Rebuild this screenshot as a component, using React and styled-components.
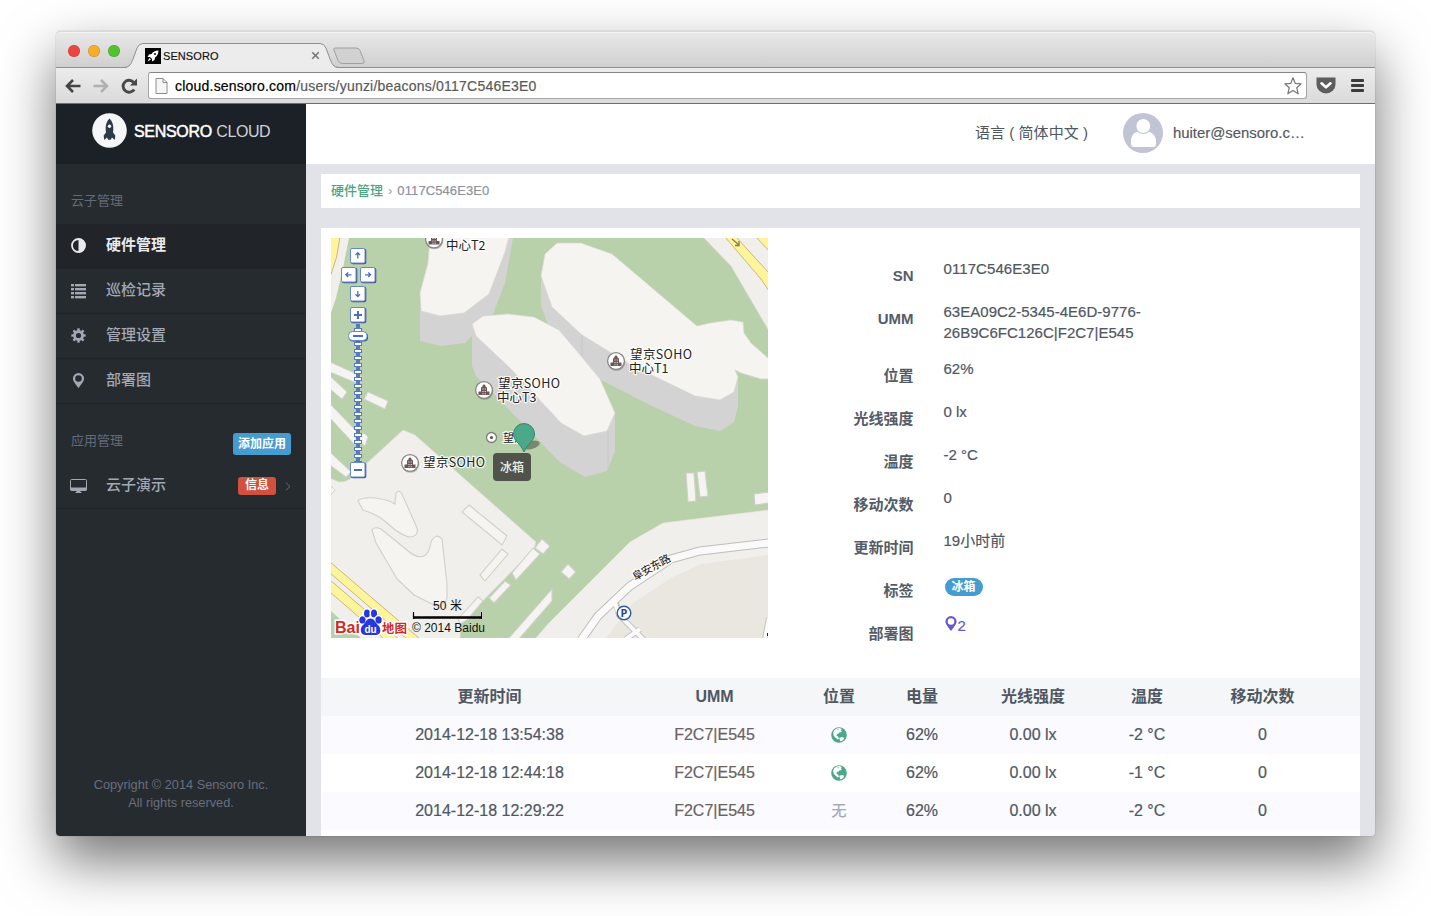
import React from "react";
import styled, { createGlobalStyle, css } from "styled-components";

const sans = `"Liberation Sans", "Noto Sans CJK SC", Arial, sans-serif`;

const GlobalStyle = createGlobalStyle`
  *, *::before, *::after { box-sizing: border-box; }
  body { margin: 0; background: #fff; font-family: ${sans}; color: #4f5762; }
  #root { height: 916px; overflow: hidden; }
`;

const Desktop = styled.div`
  height: 916px;
  padding: 31px 56px 80px;
  overflow: hidden;
  background: #fff;
`;

const Window = styled.div`
  width: 1319px;
  height: 805px;
  display: flex;
  flex-direction: column;
  border-radius: 5px 5px 4px 4px;
  box-shadow: 0 0 1px rgba(0, 0, 0, 0.5), 0 25px 55px rgba(0, 0, 0, 0.55);
`;

/* ---------- browser chrome ---------- */
const TabBar = styled.div`
  height: 37px;
  flex: none;
  display: flex;
  align-items: flex-end;
  border-radius: 5px 5px 0 0;
  border-top: 1px solid #d9d9d9;
  background: linear-gradient(#e9e9e9, #cfcfcf);
  box-shadow: inset 0 1px 0 #f3f3f3, inset 0 -1px 0 #8f8f8f;
`;

const Lights = styled.div`
  display: flex;
  gap: 8px;
  padding: 0 0 11px 12px;
`;

const Light = styled.span`
  width: 12px;
  height: 12px;
  border-radius: 50%;
  background: ${(p) => p.$color};
  box-shadow: inset 0 0 0 0.5px rgba(0, 0, 0, 0.2);
`;

const TabStrip = styled.div`
  display: grid;
  width: 240px;
  height: 25px;
  margin-left: 10px;
  & > * { grid-area: 1 / 1; }
`;

const TabContent = styled.div`
  display: flex;
  align-items: center;
  height: 25px;
  padding: 0 15px 0 15px;
  font-size: 11px;
  letter-spacing: 0.08px;
  color: #111;
  -webkit-text-stroke: 0.15px #111;
  z-index: 1;
`;

const TabTitle = styled.span`
  margin-left: 2px;
  flex: none;
  width: 148px;
`;

const Favicon = styled.svg`
  width: 16px;
  height: 16px;
  flex: none;
`;

const Toolbar = styled.div`
  height: 36px;
  flex: none;
  display: flex;
  align-items: center;
  padding: 0 11px 0 9px;
  background: linear-gradient(#ececec, #dadada);
  border-bottom: 1px solid #6f6f6f;
`;

const NavButtons = styled.div`
  display: flex;
  gap: 12px;
  width: 83px;
  align-items: center;
`;

const AddressBar = styled.div`
  width: 1159px;
  height: 27px;
  display: flex;
  align-items: center;
  padding: 0 4px 0 6px;
  background: #fff;
  border: 1px solid #a5a5a5;
  border-top-color: #868686;
  border-radius: 3px;
  font-size: 14px;
`;

const Url = styled.div`
  flex: 1;
  margin-left: 7px;
  letter-spacing: 0.215px;
  color: #5a5a5a;
  -webkit-text-stroke: 0.2px;
  b { font-weight: 400; color: #000; }
`;

const Extensions = styled.div`
  display: flex;
  align-items: center;
  gap: 15px;
  margin-left: 9px;
`;

/* ---------- application shell ---------- */
const Page = styled.div`
  flex: 1;
  min-height: 0;
  display: flex;
  overflow: hidden;
  border-radius: 0 0 4px 4px;
  background: #e2e3e9;
`;

const Sidebar = styled.aside`
  width: 250px;
  flex: none;
  display: flex;
  flex-direction: column;
  background: #262b2f;
`;

const Brand = styled.div`
  height: 60px;
  display: flex;
  align-items: center;
  padding: 0 0 7px 36px;
  gap: 7px;
  background: #1c2027;
`;

const BrandName = styled.div`
  padding-top: 3px;
  font-size: 16px;
  color: #fff;
  white-space: nowrap;
  strong { font-weight: 400; -webkit-text-stroke: 0.5px #fff; letter-spacing: -0.32px; }
  span { color: #cfd3d9; letter-spacing: -0.4px; }
`;

const NavLabel = styled.div`
  height: 60px;
  display: flex;
  align-items: center;
  justify-content: space-between;
  padding: 11px 15px 0;
  font-size: 13px;
  color: #656a7a;
`;

const NavItem = styled.div`
  height: 45px;
  display: flex;
  align-items: center;
  padding: 0 14px 2px 15px;
  font-size: 15px;
  font-weight: 500;
  color: #a2a8b4;
  border-bottom: 1px solid #202529;
  ${(p) =>
    p.$active &&
    css`
      background: #212529;
      color: #e8eaee;
      font-weight: 700;
    `}
`;

const NavIcon = styled.span`
  width: 35px;
  display: flex;
  padding-top: ${(p) => (p.$raised ? 0 : 1)}px;
  svg { display: block; width: 15px; height: 15px; overflow: visible; }
`;

const NavText = styled.span`
  flex: 1;
  padding-bottom: 4px;
`;

const Badge = styled.span`
  display: flex;
  align-items: center;
  justify-content: center;
  width: ${(p) => p.$w}px;
  height: ${(p) => p.$h}px;
  border-radius: ${(p) => p.$r}px;
  background: ${(p) => p.$color};
  color: #fff;
  font-size: 12px;
  line-height: 16px;
  font-weight: 700;
`;

const InfoBadge = styled(Badge)`
  margin-top: 1px;
  padding-bottom: 1px;
`;

const AddBadge = styled(Badge)`
  margin-top: 9px;
`;

const TagBadge = styled(Badge)`
  margin: 5px 0 0 1px;
  -webkit-text-stroke: 0;
`;

const Chevron = styled.svg`
  width: 6px;
  height: 9px;
  margin: 3px 1px 0 9px;
`;

const Copyright = styled.footer`
  margin-top: auto;
  padding-bottom: 24px;
  text-align: center;
  font-size: 12.75px;
  line-height: 18px;
  color: #696e7e;
`;

const Main = styled.main`
  flex: 1;
  min-width: 0;
  display: flex;
  flex-direction: column;
`;

const Header = styled.header`
  height: 60px;
  flex: none;
  display: flex;
  align-items: center;
  justify-content: flex-end;
  padding: 0 70px 2px 0;
  background: #fff;
  font-size: 14px;
  color: #4f5762;
`;

const Language = styled.div`
  margin-right: 35px;
  padding-bottom: 3px;
  font-size: 15px;
  letter-spacing: 0.05px;
  white-space: pre;
`;

const Avatar = styled.svg`
  width: 40px;
  height: 40px;
  margin-right: 10px;
`;

const Email = styled.div`
  width: 132px;
  font-size: 14.9px;
  white-space: nowrap;
  -webkit-text-stroke: 0.15px;
`;

const Breadcrumb = styled.nav`
  height: 34px;
  flex: none;
  display: flex;
  align-items: center;
  gap: 5px;
  margin: 10px 15px 20px;
  padding: 0 10px 1px;
  background: #fff;
  font-size: 13px;
  color: #999ba2;
  a { color: #4ba482; font-weight: 500; padding-bottom: 2px; }
`;

const Code = styled.span`
  letter-spacing: 0.1px;
  color: #8e929c;
  -webkit-text-stroke: 0.2px;
`;

const Card = styled.section`
  flex: 1;
  min-height: 0;
  margin: 0 15px;
  background: #fff;
  overflow: hidden;
`;

const Overview = styled.div`
  display: flex;
  height: 450px;
  padding: 10px;
`;

/* ---------- map ---------- */
const MapFrame = styled.div`
  position: relative;
  width: 437px;
  height: 400px;
  flex: none;
  overflow: hidden;
  svg { display: block; }
`;

const PinLabel = styled.div`
  position: absolute;
  left: 162px;
  top: 215px;
  width: 38px;
  height: 28px;
  display: flex;
  align-items: center;
  justify-content: center;
  padding-bottom: 1px;
  border-radius: 4px;
  background: #51534a;
  color: #e9efe8;
  font-size: 12px;
  font-weight: 500;
`;

/* ---------- details ---------- */
const Details = styled.dl`
  margin: 20px 0 0 72px;
  display: flex;
  flex-direction: column;
  gap: 15px;
  font-size: 15px;
  line-height: 21px;
`;

const DetailRow = styled.div`
  display: flex;
  gap: 30px;
  min-height: 28px;
`;

const Term = styled.dt`
  width: 73.5px;
  padding-top: 7px;
  text-align: right;
  font-weight: 700;
  white-space: nowrap;
  color: #545c68;
  height: 28px;
`;

const Value = styled.dd`
  margin: 0;
  width: 230px;
  letter-spacing: ${(p) => p.$spacing || 0}px;
  -webkit-text-stroke: 0.2px;
`;

const Deploy = styled.span`
  display: flex;
  gap: 1px;
  align-items: center;
  color: #6a58cf;
  padding-left: 1px;
  margin-top: -3px;
  svg { margin-top: -3px; }
  span { padding-top: 2px; }
`;

/* ---------- table ---------- */
const Row = styled.div`
  display: grid;
  grid-template-columns: 293px 157px 92px 74px 148px 80px 151px;
  height: 38px;
  align-items: center;
  justify-items: center;
  padding: 0 22px 1px;
  font-size: 16px;
  background: ${(p) => (p.$odd ? "#fafaff" : "#fff")};
  -webkit-text-stroke: 0.2px;
`;

const HeadRow = styled(Row)`
  background: #f4f6f8;
  font-weight: 700;
  -webkit-text-stroke: 0;
`;

const HeadCell = styled.span`
  padding-bottom: ${(p) => (p.$latin ? 0 : 3)}px;
`;

const Umm = styled.span`
  color: #6b6260;
`;

const None = styled.span`
  padding-bottom: 2px;
  color: #a5a8b0;
  font-size: 15px;
`;

const ArrowIcon = ({ color, flip }) => (
  <svg width="16" height="16" viewBox="0 0 16 16" fill="none" stroke={color} strokeWidth="2.6">
    <g transform={flip ? "translate(16 0) scale(-1 1)" : undefined}>
      <path d="M8 2 2 8l6 6M2.3 8H15.5" />
    </g>
  </svg>
);

const ReloadIcon = () => (
  <svg width="17" height="16" viewBox="0 0 17 16">
    <path d="M13.200 11.400A6 6 0 1 1 12.600 4.200" fill="none" stroke="#484848" strokeWidth="2.900" />
    <path d="M16 0.600V7.600H9Z" fill="#484848" />
  </svg>
);

const HalfCircle = () => (
  <svg viewBox="0 0 15 15">
    <circle cx="7.5" cy="7.5" r="6.5" fill="none" stroke="currentColor" strokeWidth="1.8" />
    <path d="M7.5 0.5a7 7 0 0 1 0 14Z" fill="currentColor" />
  </svg>
);

const ListIcon = () => (
  <svg viewBox="0 0 15 15" fill="currentColor">
    {[1, 5, 9, 13].map((y) => (
      <g key={y}>
        <rect x="0" y={y} width="3" height="2.4" />
        <rect x="4" y={y} width="11" height="2.4" />
      </g>
    ))}
  </svg>
);

const GearIcon = () => (
  <svg viewBox="0 0 15 15">
    <circle cx="7.5" cy="7.5" r="4" fill="none" stroke="currentColor" strokeWidth="2.8" />
    {[0, 45, 90, 135, 180, 225, 270, 315].map((a) => (
      <rect key={a} x="6.3" y="0.3" width="2.4" height="2.8" fill="currentColor" transform={`rotate(${a} 7.5 7.5)`} />
    ))}
  </svg>
);

const MarkerIcon = ({ size = 15 }) => (
  <svg width={size * 0.8} height={size} viewBox="1.5 0 12 15">
    <path
      fillRule="evenodd"
      fill="currentColor"
      d="M7.500 0a5.600 5.600 0 0 1 5.600 5.600C13.100 8.500 9.500 12.500 7.500 15 5.500 12.500 1.900 8.500 1.900 5.600A5.600 5.600 0 0 1 7.500 0ZM7.500 2.200a3.300 3.300 0 1 0 0 6.600 3.300 3.300 0 0 0 0-6.600Z"
    />
  </svg>
);

const MonitorIcon = () => (
  <svg viewBox="0 0 15 15">
    <rect x="-0.5" y="1.500" width="16" height="11" rx="1" fill="none" stroke="currentColor" strokeWidth="1" />
    <path d="M-0.500 9.500h16v3h-16zM5.500 12.500h4v1.500h1v1h-6v-1h1z" fill="currentColor" />
  </svg>
);

const GlobeIcon = () => (
  <svg width="16" height="16" viewBox="0 0 16 16">
    <circle cx="8" cy="8" r="7.800" fill="#4ba888" />
    <path d="M3 3.500 5.500 1.500 8.500 1 10.800 2 9.800 3.500 11 4.300 9.300 5.600 8.300 5.200 7.800 6.500 6 7 5.500 8.800 7 9.600 8 11.500 6.800 12.600 4.300 10.500 2.600 8.500 2.200 5.500Z" fill="#fff" />
    <path d="M8.300 10.700 11 10 13.200 10.800 12.300 13 9.600 14.500 8.700 12.800Z" fill="#fff" />
    <path d="M6 2.500 7.600 2.200 7 3.500Z" fill="#4ba888" />
  </svg>
);

const Logo = () => (
  <svg width="35" height="35" viewBox="0 0 35 35">
    <circle cx="17.500" cy="17.500" r="17.300" fill="#f4f6f8" />
    <path
      fill="#2c3947"
      d="M17.500 5.500C20.500 8.500 21.600 12 21.300 16.500L21 19.500 23.300 22.500 22.800 27 20 24.600 18.700 26.800H16.300L15 24.600 12.200 27 11.700 22.500 14 19.500 13.700 16.500C13.400 12 14.500 8.500 17.500 5.500Z"
    />
    <circle cx="17.500" cy="13.300" r="1.700" fill="#f4f6f8" />
  </svg>
);

const Building = ({ x, y }) => (
  <g transform={`translate(${x} ${y})`}>
    <circle cx="0.500" cy="1" r="8.800" fill="#000" opacity="0.25" />
    <circle r="8.400" fill="#fff" stroke="#8b8683" strokeWidth="1.300" />
    <path d="M-5.500 5V1.500H-3V-2.500L-1.500-3.500V-4.500L0-5.800 1.500-4.500V-3.500L3-2.500V1.500H5.500V5Z" fill="#6b5654" />
    <path d="M-1.500-1.500h1v1h-1zM.7-1.500h1v1h-1zM-1.500 1h1v1h-1zM.7 1h1v1h-1zM-1.500 3.200h1v1h-1zM.7 3.200h1v1h-1z" fill="#fff" />
  </g>
);

const halo = { paintOrder: "stroke", stroke: "#fff", strokeWidth: 2.5, strokeOpacity: 0.85, strokeLinejoin: "round" };

const Label = ({ x, y, text, second, size = 12.5 }) => (
  <text x={x} y={y} fontSize={size} fill="#222" fontFamily={`"Noto Sans CJK SC", sans-serif`} {...halo}>
    <tspan textLength={text.length > 3 && text.startsWith("望") ? 62 : undefined}>{text}</tspan>
    {second && <tspan x={x - 1} dy="14">{second}</tspan>}
  </text>
);

const PadButton = ({ x, y, glyph, bold }) => (
  <g transform={`translate(${x} ${y})`}>
    <rect x="0.800" y="0.800" width="15.500" height="15.500" rx="2" fill="#3c5590" />
    <rect x="0.500" y="0.500" width="14.500" height="14.500" rx="1.500" fill="#fff" stroke="#6687cc" />
    <path d={glyph} fill="none" stroke="#4a6fbe" strokeWidth={bold ? 2 : 1.3} />
  </g>
);

const glyphs = {
  up: "M7.800 10.500V5M5.500 7 7.800 4.700 10 7",
  down: "M7.800 5V10.500M5.500 8.300 7.800 10.600 10 8.300",
  left: "M10.500 7.800H5M7.200 5.500 4.900 7.800 7.200 10",
  right: "M5 7.800H10.500M8.300 5.500 10.600 7.800 8.300 10",
  plus: "M4 8h8M8 4v8",
  minus: "M4 8h8",
};

const MapCanvas = () => (
  <svg width="437" height="400" viewBox="0 0 437 400">
    <rect width="437" height="400" fill="#b9d1aa" />

    {/* north-west road */}
    <path d="M0 0H18L12 30 5 60 0 75Z" fill="#f0efec" />
    <path d="M-1 -1H9Q7 20 -1 39Z" fill="#fdf59c" stroke="#cdb679" />

    {/* north-east road */}
    <path d="M372 -1 400 28 438 93V-1Z" fill="#f0efec" stroke="#dcdbd6" strokeWidth="0.700" />
    <path d="M394 -1 430 41 438 53V35L405 -1ZM425 -1 438 13V-1Z" fill="#fdf59c" stroke="#cdb679" />
    <path d="M401 1 408 7M408 3V7.500H404" fill="none" stroke="#8c7a45" strokeWidth="1.300" />

    {/* west sheds */}
    <g fill="#f5f4f1" stroke="#d3d2cd" strokeWidth="1">
      <path d="M-1 124 32 139 28 146-1 134ZM-1 138 16 154 11 161-1 151ZM37 154 57 163 54 171 33 161ZM-1 166 30 198 24 207-1 180Z" />
      <path d="M-1 214 20 234 15 239-1 227ZM33 195 37 199 34 208 24 200Z" />
    </g>

    {/* central plaza */}
    <path d="M72 192 84 197 205 304 203 311 130 385 129 401H-1V240L8 244Q20 245 35 226Z" fill="#f0efec" stroke="#dcdbd6" strokeWidth="0.700" />
    <path d="M0 373 30 400H0Z" fill="#b9d1aa" />
    <path d="M-1 247 4 252-1 258Z" fill="#f5f4f1" stroke="#d3d2cd" />
    <path d="M-1 324 89 401H76L-1 335ZM-1 342 68 401H53L-1 354Z" fill="#fdf59c" stroke="#cdb679" />

    <g fill="#f5f4f1" stroke="#d0cfca" strokeWidth="1.100">
      <path d="M27 263Q29 259 45 260 58 262 64 266L65 255Q68 251 71 256L86 290Q88 298 79 299 70 298 55 284 47 277 32 272Z" />
      <path d="M41 292Q43 288 50 291L76 312Q86 321 93 318 98 316 100 304 105 294 111 301L116 346V360Q114 369 103 367L83 357 66 341 45 305Z" />
      <path d="M138 267 176 298 171 307 131 274ZM171 311 177 316 154 343 149 337ZM202 310 209 316 185 342 181 335ZM174 343 180 347 163 365 158 360ZM147 359 152 363 136 382 129 386 127 381ZM211 301 219 308 212 316 204 310ZM237 326 245 334 238 341 230 334Z" />
      <path d="M355 235 363 235 365 263 357 264ZM366 234 374 233 377 258 369 259ZM423 256 438 254V265L424 267Z" />
      <path d="M221 351V363L188 401H177Z" />
    </g>

    {/* south-east district */}
    <path d="M204 401 217 386 299 304 332 285 438 272V401Z" fill="#f0efec" stroke="#e4e2dd" strokeWidth="0.700" />
    <path d="M275 400 302 365 340 340 370 326 437 317V400Z" fill="#e9e7df" />
    <path d="M285 365 288 377 314 403M295 401 309 391M434 401 438 380" fill="none" stroke="#c5c3bf" strokeWidth="6" />
    <path d="M250 402 267 378 299 348 340 321 369 313 438 305" fill="none" stroke="#c0beba" strokeWidth="9" />
    <path d="M250 402 267 378 299 348 340 321 369 313 438 305" fill="none" stroke="#fafafa" strokeWidth="7" />
    <path d="M283 362 288 377 314 403M295 401 309 391M434 401 438 380" fill="none" stroke="#fafafa" strokeWidth="4" />

    {/* towers */}
    <path d="M89 73V103L110 108 134 105 141 98 162 76 174 45 182 0H170Z" fill="#d3d3d3" />
    <path d="M99 -1 97 25 89 55 90 73 109 78 133 75 158 56 174 14 178 -1Z" fill="#f5f4f1" stroke="#d8d7d3" strokeWidth="0.700" />
    <path d="M210 38V68L216 84 230 110 270 142 317 166 364 188 389 193 403 184 407 168V139L389 130 300 100Z" fill="#d3d3d3" />
    <path d="M210 38 214 16 226 5H250L281 16 366 88 379 85 400 82 412 84 413 95 420 105 438 121V141H430L410 135 404 132 407 139 403 154 389 162 364 158 300 127 251 97 221 69Z" fill="#f5f4f1" stroke="#d8d7d3" strokeWidth="0.700" />
    <path d="M251 97V118" stroke="#c5c5c5" />
    <path d="M141 86V128L145 138 195 189 217 212 230 225 254 239 276 233 284 213V175Z" fill="#d3d3d3" />
    <path d="M141 86 152 78 177 76 203 79 228 92 250 118 269 141 284 175 276 193 253 198 230 185 217 171 180 131 145 98Z" fill="#f5f4f1" stroke="#d8d7d3" strokeWidth="0.700" />
    <path d="M277 193V232" stroke="#c8c8c8" />

    {/* points of interest */}
    <Building x={103} y={1.5} />
    <Building x={153} y={152} />
    <Building x={285} y={123} />
    <Building x={79} y={225} />
    <Label x={115} y={12} text="中心T2" />
    <Label x={167} y={150} text="望京SOHO" second="中心T3" />
    <Label x={299} y={121} text="望京SOHO" second="中心T1" />
    <Label x={92} y={229} text="望京SOHO" />
    <Label x={172} y={204} size={11} text="望京" />
    <circle cx="160.500" cy="199.500" r="5" fill="#fff" stroke="#817b78" strokeWidth="1.300" />
    <circle cx="160.500" cy="199.500" r="1.600" fill="#5e5553" />
    <text transform="translate(304 343) rotate(-29)" fontSize="11" fill="#111" fontFamily={`"Noto Sans CJK SC", sans-serif`} textLength="42" {...halo}>
      阜安东路
    </text>
    <circle cx="293" cy="375" r="6.800" fill="#fff" stroke="#335a98" strokeWidth="1.400" />
    <text x="293" y="379" fontSize="11" fontWeight="700" fill="#1f4b94" textAnchor="middle" fontFamily="Noto Sans">P</text>

    {/* pan and zoom control */}
    <path d="M27 86V226" stroke="#5878c0" strokeWidth="4" />
    {Array.from({ length: 20 }, (_, i) => (
      <rect key={i} x="23.500" y={90.5 + i * 7} width="7" height="3" fill="#fff" stroke="#5878c0" />
    ))}
    <PadButton x={19} y={10} glyph={glyphs.up} />
    <PadButton x={10} y={29} glyph={glyphs.left} />
    <PadButton x={29} y={29} glyph={glyphs.right} />
    <PadButton x={19} y={48} glyph={glyphs.down} />
    <PadButton x={19} y={69} glyph={glyphs.plus} bold />
    <PadButton x={19} y={224} glyph={glyphs.minus} bold />
    <rect x="18" y="94.500" width="19" height="9" rx="4" fill="#3c5590" />
    <rect x="17.500" y="93.500" width="18.500" height="9" rx="4" fill="#fff" stroke="#6687cc" />
    <path d="M22 98h10" stroke="#4a6fbe" strokeWidth="2" />

    {/* device pin */}
    <ellipse cx="200" cy="207" rx="9" ry="4" fill="#000" opacity="0.350" transform="rotate(-14 200 207)" />
    <path d="M193 214C190 206 182.500 203 182.500 196A10.500 10.500 0 0 1 203.500 196C203.500 203 196 206 193 214Z" fill="#4ba888" stroke="#34866a" strokeWidth="1" />

    {/* scale */}
    <path d="M82.500 374V381M150.500 374V381" stroke="#fff" strokeWidth="3" opacity="0.700" />
    <path d="M82.500 374V381M150.500 374V381" stroke="#000" strokeWidth="1.300" />
    <path d="M82 379.500H151" stroke="#000" strokeWidth="2.600" />
    <text x="102" y="372" fontSize="12" fill="#111" fontFamily={sans} textLength="29">50 米</text>
    <text x="81" y="394" fontSize="12" fill="#111" fontFamily={sans} textLength="73">© 2014 Baidu</text>

    {/* provider logo */}
    <g fontFamily={`"Liberation Sans", "Noto Sans CJK SC", sans-serif`} fontWeight="700">
      <text x="4" y="395" fontSize="16" fill="#d22a26" textLength="25" lengthAdjust="spacingAndGlyphs" paintOrder="stroke" stroke="#fff" strokeWidth="3">Bai</text>
      <g fill="#2438dd" stroke="#fff" strokeWidth="3" paintOrder="stroke">
        <ellipse cx="31.500" cy="382" rx="3" ry="3.600" />
        <ellipse cx="36" cy="375.500" rx="3" ry="4" />
        <ellipse cx="43" cy="375.500" rx="3" ry="4" />
        <ellipse cx="47.500" cy="382" rx="3" ry="3.600" />
        <path d="M39.500 380.500C44 380.500 44 385 48 388 51 393 49 397.500 44 397H35C31 397.500 28 393 31 388 35 385 35 380.500 39.500 380.500Z" />
      </g>
      <g fill="#2438dd">
        <ellipse cx="31.500" cy="382" rx="3" ry="3.600" />
        <ellipse cx="47.500" cy="382" rx="3" ry="3.600" />
      </g>
      <text x="33.500" y="395" fontSize="10" fill="#fff" textLength="12">du</text>
      <text x="51" y="394.500" fontSize="12.500" fill="#d22a26" textLength="25" paintOrder="stroke" stroke="#fff" strokeWidth="3">地图</text>
    </g>
    <rect x="436" y="395" width="1" height="3" fill="#222" />
  </svg>
);

const nav = [
  { text: "硬件管理", icon: <HalfCircle />, active: true },
  { text: "巡检记录", icon: <ListIcon /> },
  { text: "管理设置", icon: <GearIcon /> },
  { text: "部署图", icon: <MarkerIcon /> },
];

const details = [
  ["SN", "0117C546E3E0", 0.08],
  ["UMM", <>63EA09C2-5345-4E6D-9776-<br />26B9C6FC126C|F2C7|E545</>, 0.02],
  ["位置", "62%"],
  ["光线强度", "0 lx"],
  ["温度", "-2 °C"],
  ["移动次数", "0"],
  ["更新时间", "19小时前"],
  ["标签", <TagBadge key="tag" $w={38} $h={18} $r={9} $color="#469bd0">冰箱</TagBadge>],
  ["部署图", <Deploy key="deploy"><MarkerIcon size={15} /><span>2</span></Deploy>],
];

const headings = ["更新时间", "UMM", "位置", "电量", "光线强度", "温度", "移动次数"];

const records = [
  ["2014-12-18 13:54:38", true, "-2 °C"],
  ["2014-12-18 12:44:18", true, "-1 °C"],
  ["2014-12-18 12:29:22", false, "-2 °C"],
];

const Browser = () => (
  <>
    <TabBar>
      <Lights>
        <Light $color="#ec4540" />
        <Light $color="#f6ad2b" />
        <Light $color="#53c22d" />
      </Lights>
      <TabStrip>
        <svg width="240" height="25" viewBox="0 0 240 25" overflow="visible">
          <path d="M-6 25.500C0 24 1 21 3 16L7 5Q9 .5 13 .5H190Q194 .5 196 5L200 16C202 21 203 24 209 25.500Z" fill="#ececec" />
          <path d="M-6 24.500C0 24 1 21 3 16L7 5Q9 .5 13 .5H190Q194 .5 196 5L200 16C202 21 203 24 209 24.500" fill="none" stroke="#8f8f8f" />
          <path d="M204 7Q203 5 205.500 5H226Q229 5 230 7.500L234 17.500Q235 20.500 232 20.500H213Q209.500 20.500 208 17.500Z" fill="#d1d1d1" stroke="#9f9f9f" />
        </svg>
        <TabContent>
          <Favicon viewBox="0 0 16 16">
            <rect width="16" height="16" fill="#000" />
            <path d="M13.500 2.500C10 2.500 8 4 6.500 6L4 6.500 2.500 9 5 9 7 11 7 13.500 9.500 12 10 9.500C12 8 13.500 6 13.500 2.500ZM4.500 10 2.500 13.500 6 11.500Z" fill="#fff" />
            <circle cx="10" cy="6" r="1" fill="#000" />
          </Favicon>
          <TabTitle>SENSORO</TabTitle>
          <svg width="9" height="9" viewBox="0 0 9 9">
            <path d="M1.200 1.200 7.800 7.800M7.800 1.200 1.200 7.800" stroke="#777" strokeWidth="1.600" />
          </svg>
        </TabContent>
      </TabStrip>
    </TabBar>
    <Toolbar>
      <NavButtons>
        <ArrowIcon color="#444" />
        <ArrowIcon color="#b0b0b0" flip />
        <ReloadIcon />
      </NavButtons>
      <AddressBar>
        <svg width="13" height="16" viewBox="0 0 13 16">
          <path d="M1 .5H8L12 4.500V15.500H1ZM8 .5V4.500H12" fill="#f6f6f6" stroke="#8d8d8d" />
        </svg>
        <Url>
          <b>cloud.sensoro.com</b>/users/yunzi/beacons/0117C546E3E0
        </Url>
        <svg width="18" height="18" viewBox="0 0 18 18">
          <path d="M9 .8 11.300 6.400 17.200 6.800 12.700 10.700 14.200 16.800 9 13.500 3.800 16.800 5.300 10.700 .8 6.800 6.700 6.400Z" fill="#fff" stroke="#777" strokeWidth="1.200" strokeLinejoin="round" />
        </svg>
      </AddressBar>
      <Extensions>
        <svg width="20" height="17" viewBox="0 0 20 17">
          <path d="M.5.5H19.500V7.500A9.500 9 0 0 1 .5 7.500Z" fill="#5d5d5d" />
          <path d="M5.500 6.300 10 10.300 14.500 6.300" fill="none" stroke="#fff" strokeWidth="2.600" strokeLinecap="round" strokeLinejoin="round" />
        </svg>
        <svg width="13" height="13" viewBox="0 0 13 13">
          <path d="M1 1.500H12M1 6.500H12M1 11.500H12" stroke="#3c3c3c" strokeWidth="2.800" strokeLinecap="round" />
        </svg>
      </Extensions>
    </Toolbar>
  </>
);

export default function App() {
  return (
    <Desktop>
      <GlobalStyle />
      <Window>
        <Browser />
        <Page>
          <Sidebar>
            <Brand>
              <Logo />
              <BrandName>
                <strong>SENSORO</strong> <span>CLOUD</span>
              </BrandName>
            </Brand>
            <NavLabel>云子管理</NavLabel>
            {nav.map((n) => (
              <NavItem key={n.text} $active={n.active}>
                <NavIcon>{n.icon}</NavIcon>
                <NavText>{n.text}</NavText>
              </NavItem>
            ))}
            <NavLabel>
              应用管理
              <AddBadge $w={58} $h={22} $r={3} $color="#469bd0">添加应用</AddBadge>
            </NavLabel>
            <NavItem>
              <NavIcon $raised><MonitorIcon /></NavIcon>
              <NavText>云子演示</NavText>
              <InfoBadge $w={38} $h={18} $r={3} $color="#d1503f">信息</InfoBadge>
              <Chevron viewBox="0 0 6 9">
                <path d="M1 .8 5 4.500 1 8.200" fill="none" stroke="#656a7a" />
              </Chevron>
            </NavItem>
            <Copyright>
              Copyright © 2014 Sensoro Inc.
              <br />
              All rights reserved.
            </Copyright>
          </Sidebar>
          <Main>
            <Header>
              <Language>语言 ( 简体中文 )</Language>
              <Avatar viewBox="0 0 40 40">
                <circle cx="20" cy="20" r="20" fill="#c0c4d5" />
                <path d="M8 32V28C8 22 12 18.500 16 18.500H24C28 18.500 33 22 33 28V31Q33 34 30 34H11Q8 34 8 31Z" fill="#fff" />
                <circle cx="20.300" cy="13" r="7.500" fill="#fff" stroke="#c0c4d5" strokeWidth="1.200" />
              </Avatar>
              <Email>huiter@sensoro.c…</Email>
            </Header>
            <Breadcrumb>
              <a>硬件管理</a>
              <span>›</span>
              <Code>0117C546E3E0</Code>
            </Breadcrumb>
            <Card>
              <Overview>
                <MapFrame>
                  <MapCanvas />
                  <PinLabel>冰箱</PinLabel>
                </MapFrame>
                <Details>
                  {details.map(([term, value, spacing]) => (
                    <DetailRow key={term}>
                      <Term>{term}</Term>
                      <Value $spacing={spacing}>{value}</Value>
                    </DetailRow>
                  ))}
                </Details>
              </Overview>
              <HeadRow>
                {headings.map((h) => (
                  <HeadCell key={h} $latin={h === "UMM"}>{h}</HeadCell>
                ))}
              </HeadRow>
              {records.map(([time, located, temp], i) => (
                <Row key={time} $odd={i % 2 === 0}>
                  <span>{time}</span>
                  <Umm>F2C7|E545</Umm>
                  {located ? <GlobeIcon /> : <None>无</None>}
                  <span>62%</span>
                  <span>0.00 lx</span>
                  <span>{temp}</span>
                  <span>0</span>
                </Row>
              ))}
            </Card>
          </Main>
        </Page>
      </Window>
    </Desktop>
  );
}
